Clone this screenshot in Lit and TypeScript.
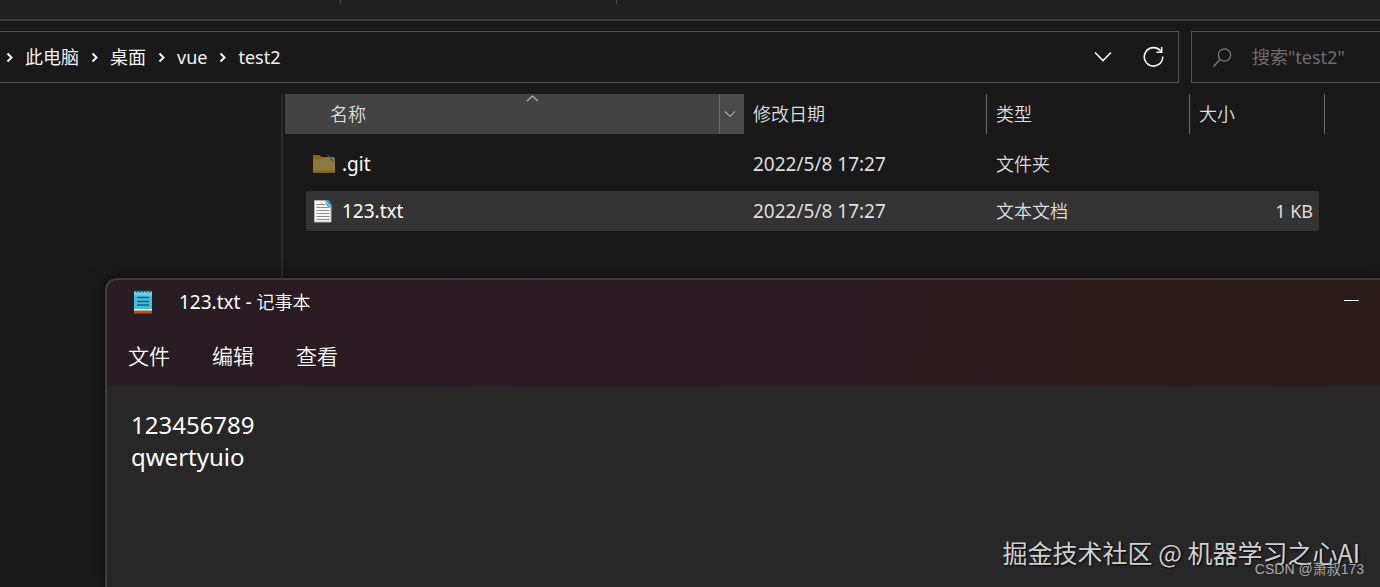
import { LitElement, html, css, svg } from "lit";
import { customElement, property } from "lit/decorators.js";

interface FileRow {
  kind: "folder" | "text";
  name: string;
  date: string;
  type: string;
  size: string;
  selected: boolean;
}

const FILES: FileRow[] = [
  { kind: "folder", name: ".git", date: "2022/5/8 17:27", type: "文件夹", size: "", selected: false },
  { kind: "text", name: "123.txt", date: "2022/5/8 17:27", type: "文本文档", size: "1 KB", selected: true },
];

const folderIcon = html`<svg width="24" height="24" viewBox="0 0 24 24" aria-hidden="true">
  <path d="M1 4q0-1 1-1h5.500l2 2h13v15.500H1z" fill="#8a6618" />
  <path d="M1 7.500h8l2-1.500h12v14.500H1z" fill="#8f7840" />
  <path d="M1 18.500h22v2H1z" fill="#876522" />
  <path d="M14 2l3 1.500 2.500 3 2 1 0.500 2.500-2.500-2-2-2.500z" fill="#1f5f78" />
</svg>`;

const textIcon = html`<svg width="24" height="24" viewBox="0 0 24 24" aria-hidden="true">
  <path d="M2.500 1.500h12l4.500 4.500v17H2.500z" fill="#f6f6f6" stroke="#b5b5b5" />
  <path d="M4.500 5.500h9M4.500 8.500h13M4.500 11.500h13M4.500 14.500h13M4.500 17.500h13M4.500 20.500h13" stroke="#8d8d8d" />
  <path d="M13 1h3.500l3 4.500 1 4.500-2.500-2-3-1z" fill="#3b93bb" />
  <path d="M14.500 2.500l1.500 3 2.500 1" fill="none" stroke="#bfe3f0" />
</svg>`;

const notepadIcon = html`<svg width="20" height="26" viewBox="0 0 20 26" aria-hidden="true">
  <path d="M1 21h18v3.500H1z" fill="#b5571c" />
  <path d="M1 19.500h18v2H1z" fill="#f3e9e0" />
  <path d="M1 2.500h18v17.500H1z" fill="#45bddd" />
  <path d="M1 2.500h18v4H1z" fill="#62d3ee" />
  <path d="M4 8.500h12M4 12.500h12M4 16h12" stroke="#0c6482" stroke-width="1.600" />
  <path d="M3 1l1.200 2.600M6.200 1l1.200 2.600M9.400 1l1.200 2.600M12.600 1l1.200 2.600M15.800 1l1.200 2.600" stroke="#174f63" stroke-width="1.300" />
</svg>`;

const chevron = (w: number, h: number, d: string, width: number) =>
  html`<svg width=${w} height=${h} viewBox="0 0 ${w} ${h}" fill="none" stroke="currentColor" stroke-width=${width} aria-hidden="true">
    ${svg`<path d=${d} />`}
  </svg>`;

@customElement("address-bar")
class AddressBar extends LitElement {
  @property({ type: Array }) path: string[] = [];

  static styles = css`
    :host {
      display: flex;
      gap: 12px;
      padding-top: 10px;
      font-weight: 400;
    }
    .location,
    .search {
      box-sizing: border-box;
      height: 52px;
      display: flex;
      align-items: center;
      border: 1px solid #535353;
    }
    .location {
      flex: 1;
      border-left: 0;
      padding: 0 14px 0 6px;
      justify-content: space-between;
    }
    .crumbs,
    .crumb,
    .tools {
      display: flex;
      align-items: center;
    }
    .crumbs {
      gap: 12px;
      margin: 0;
      padding: 0;
      list-style: none;
      color: #f4f4f4;
    }
    .crumb {
      gap: 12px;
    }
    .crumb a {
      color: inherit;
      text-decoration: none;
    }
    .tools {
      gap: 30px;
    }
    button {
      display: flex;
      padding: 0;
      border: 0;
      background: none;
      color: #f4f4f4;
    }
    .search {
      width: 189px;
      border-right: 0;
      padding-left: 20px;
      gap: 19px;
      color: #7c7c7c;
    }
    .search input {
      flex: 1;
      min-width: 0;
      padding: 0;
      border: 0;
      outline: 0;
      background: none;
      color: #fff;
      font: inherit;
    }
    .search input::placeholder {
      color: #6c6c6c;
      opacity: 1;
    }
    .search label {
      display: flex;
    }
  `;

  render() {
    return html`
      <nav class="location" aria-label="地址">
        <ol class="crumbs">
          ${this.path.map(
            (part) => html`<li class="crumb">
              ${chevron(7, 12, "M1.500 2.500l4 4-4 4", 2)}<a href="#">${part}</a>
            </li>`
          )}
        </ol>
        <div class="tools">
          <button aria-label="展开">${chevron(20, 12, "M2 1.500l8 8 8-8", 1.6)}</button>
          <button aria-label="刷新">
            <svg width="21" height="22" viewBox="0 0 21 22" fill="none" stroke="currentColor" stroke-width="1.600" aria-hidden="true">
              <path d="M18 5.500A9.200 9.200 0 1 0 19.700 10.500" />
              <path d="M18.700 1v5.300h-5.200" />
            </svg>
          </button>
        </div>
      </nav>
      <div class="search">
        <label for="q" aria-label="搜索">
          <svg width="21" height="21" viewBox="0 0 21 21" fill="none" stroke="currentColor" stroke-width="1.300" aria-hidden="true">
            <circle cx="12.500" cy="8" r="6.200" />
            <path d="M8 12.500L1.500 19.500" />
          </svg>
        </label>
        <input id="q" type="text" placeholder='搜索"test2"' />
      </div>
    `;
  }
}

@customElement("file-list")
class FileList extends LitElement {
  @property({ type: Array }) files: FileRow[] = [];

  static styles = css`
    :host {
      display: block;
      border-left: 2px solid #2b2b2b;
      padding-left: 2px;
      color: #dedede;
    }
    table {
      border-collapse: collapse;
    }
    table,
    thead,
    tbody {
      display: block;
    }
    tr {
      display: grid;
      align-items: center;
      height: 40px;
    }
    th,
    td {
      padding: 0;
      text-align: left;
      font-weight: inherit;
    }
    .head {
      width: 1040px;
      grid-template-columns: 459px 243px 203px 135px;
    }
    .head th {
      box-sizing: border-box;
      display: flex;
      align-items: center;
      height: 40px;
      padding-left: 9px;
      border-right: 1px solid #6a6a6a;
    }
    .head .sorted {
      position: relative;
      justify-content: space-between;
      padding-left: 45px;
      border: 0;
      background: #434343;
    }
    .arrow {
      position: absolute;
      top: 1px;
      left: 241px;
      display: flex;
      color: #b5b5b5;
    }
    .filter {
      box-sizing: border-box;
      display: flex;
      align-items: center;
      justify-content: center;
      width: 25px;
      height: 40px;
      padding: 0 4px 0 0;
      border: 0;
      border-left: 1px solid #666;
      background: #4a4a4a;
      color: #a8a8a8;
    }
    .body {
      display: grid;
      gap: 7px;
      width: 1013px;
      padding: 10px 0 0 21px;
    }
    .row {
      grid-template-columns: 447px 243px 203px 114px;
      border-radius: 2px;
    }
    .selected {
      background: #333;
    }
    .name {
      display: flex;
      align-items: center;
      gap: 6px;
      padding-left: 6px;
      color: #fff;
    }
    .name,
    .date {
      font-size: 19px;
    }
    .name,
    .date,
    .size {
      font-weight: 400;
    }
    .size {
      text-align: right;
    }
  `;

  render() {
    return html`
      <table>
        <thead>
          <tr class="head">
            <th class="sorted" aria-sort="ascending">
              名称
              <span class="arrow">${chevron(13, 7, "M1 6l5.500-5 5.500 5", 1.1)}</span>
              <button class="filter" aria-label="筛选">${chevron(12, 8, "M1 1.500l5 5 5-5", 1.1)}</button>
            </th>
            <th>修改日期</th>
            <th>类型</th>
            <th>大小</th>
          </tr>
        </thead>
        <tbody class="body">
          ${this.files.map(
            (f) => html`<tr class="row ${f.selected ? "selected" : ""}">
              <td class="name">${f.kind === "folder" ? folderIcon : textIcon}<span>${f.name}</span></td>
              <td class="date">${f.date}</td>
              <td>${f.type}</td>
              <td class="size">${f.size}</td>
            </tr>`
          )}
        </tbody>
      </table>
    `;
  }
}

@customElement("notepad-window")
class NotepadWindow extends LitElement {
  @property() file = "";
  @property() text = "";

  static styles = css`
    :host {
      box-sizing: border-box;
      display: flex;
      flex-direction: column;
      border: solid #3d3b3c;
      border-width: 2px 0 0 2px;
      border-radius: 12px 0 0 0;
      overflow: hidden;
      background: #272727;
      box-shadow: 0 0 16px rgba(0, 0, 0, 0.5);
      color: #fff;
    }
    .chrome {
      background: linear-gradient(95deg, #291c22 0%, #2b1a23 30%, #2d1b22 60%, #2f1b1c 78%, #2c1c1b 90%, #2a1d1b 100%);
    }
    .title {
      display: flex;
      align-items: center;
      height: 44px;
      padding: 0 21px 0 26px;
    }
    .title h1 {
      flex: 1;
      margin: 0 0 0 26px;
      font: inherit;
    }
    .file {
      font-size: 19px;
      font-weight: 400;
    }
    .minimise {
      width: 15px;
      height: 20px;
      padding: 0;
      border: 0;
      background: linear-gradient(#fff, #fff) center 8px / 15px 1px no-repeat;
    }
    .menu {
      display: flex;
      align-items: center;
      gap: 42px;
      height: 60px;
      padding: 2px 0 0 21px;
    }
    .menu button {
      padding: 0;
      border: 0;
      background: none;
      color: inherit;
      font: inherit;
      font-size: 21px;
    }
    textarea {
      flex: 1;
      padding: 23px 24px 0 24px;
      border: 0;
      outline: 0;
      resize: none;
      background: none;
      color: inherit;
      font: inherit;
      font-weight: 400;
      font-size: 24px;
      line-height: 32px;
    }
  `;

  render() {
    return html`
      <div class="chrome">
        <div class="title">
          ${notepadIcon}
          <h1><span class="file">${this.file} - </span>记事本</h1>
          <button class="minimise" aria-label="最小化"></button>
        </div>
        <div class="menu">
          <button>文件</button>
          <button>编辑</button>
          <button>查看</button>
        </div>
      </div>
      <textarea aria-label="内容" spellcheck="false" .value=${this.text}></textarea>
    `;
  }
}

@customElement("app-root")
class AppRoot extends LitElement {
  static styles = css`
    :host {
      position: relative;
      display: flex;
      flex-direction: column;
      height: 100vh;
      overflow: hidden;
      background: #191919;
      font: 350 18px/24px "Noto Sans", "Noto Sans CJK SC", sans-serif;
    }
    .ribbon {
      display: flex;
      height: 19px;
      padding-left: 340px;
      gap: 275px;
      border-bottom: 2px solid #3c3c3c;
      background: #202020;
    }
    .divider {
      width: 1px;
      height: 4px;
      background: #4a4a4a;
    }
    .main {
      flex: 1;
      display: flex;
      padding: 11px 0 0 281px;
    }
    .notepad {
      position: absolute;
      inset: 278px 0 0 105px;
    }
    .mark,
    .credit {
      position: absolute;
      margin: 0;
      white-space: nowrap;
    }
    .mark {
      right: 20px;
      bottom: 18px;
      color: #d0d0d0;
      font: 400 25px/34px "Noto Sans CJK SC", sans-serif;
      text-shadow: 1px 1px 2px #000;
    }
    .credit {
      right: 16px;
      bottom: 8px;
      color: #a9a9a9;
      font: 400 14px/20px "Liberation Sans", "Noto Sans CJK SC", sans-serif;
    }
  `;

  render() {
    return html`
      <div class="ribbon"><span class="divider"></span><span class="divider"></span></div>
      <address-bar .path=${["此电脑", "桌面", "vue", "test2"]}></address-bar>
      <div class="main"><file-list .files=${FILES}></file-list></div>
      <notepad-window class="notepad" file="123.txt" .text=${"123456789\nqwertyuio"}></notepad-window>
      <p class="mark">掘金技术社区 @ 机器学习之心AI</p>
      <p class="credit">CSDN @萧叔173</p>
    `;
  }
}
